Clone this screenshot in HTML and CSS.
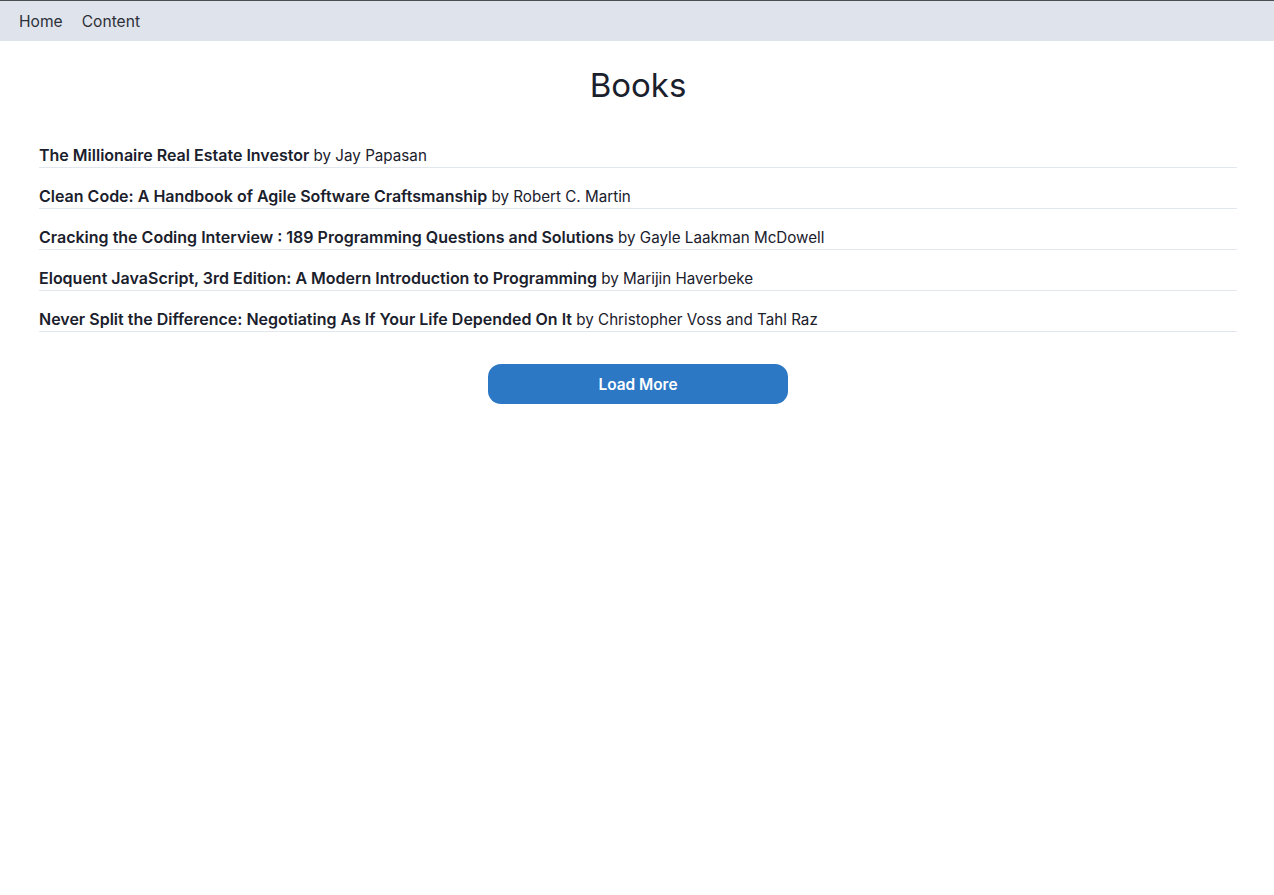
FILE: index.html
```html
<!DOCTYPE html>
<html lang="en">
<head>
<meta charset="utf-8">
<title>Books</title>
<link rel="stylesheet" href="styles.css">
</head>
<body>
<nav class="nav">
  <a class="nav-link" href="#">Home</a>
  <a class="nav-link" href="#">Content</a>
</nav>
<main class="main">
  <h1 class="title">Books</h1>
  <ul class="book-list">
    <li class="book"><strong class="book-title">The Millionaire Real Estate Investor</strong> by Jay Papasan</li>
    <li class="book"><strong class="book-title">Clean Code: A Handbook of Agile Software Craftsmanship</strong> by Robert C. Martin</li>
    <li class="book"><strong class="book-title">Cracking the Coding Interview : 189 Programming Questions and Solutions</strong> by Gayle Laakman McDowell</li>
    <li class="book"><strong class="book-title">Eloquent JavaScript, 3rd Edition: A Modern Introduction to Programming</strong> by Marijin Haverbeke</li>
    <li class="book"><strong class="book-title">Never Split the Difference: Negotiating As If Your Life Depended On It</strong> by Christopher Voss and Tahl Raz</li>
  </ul>
  <div class="actions">
    <button class="load-more" type="button">Load More</button>
  </div>
</main>
</body>
</html>
```

FILE: styles.css
```css
* { box-sizing: border-box; }
html, body {
  margin: 0;
  padding: 0;
  background: #ffffff;
}
body {
  font-family: Inter, "Noto Sans", sans-serif;
  color: #1a202c;
  font-size: 16px;
}
.nav {
  display: flex;
  align-items: center;
  gap: 19px;
  height: 41px;
  padding: 0 19px;
  background: #dfe4ec;
  border-top: 1px solid #4a4d52;
}
.nav-link {
  color: #2d3038;
  text-decoration: none;
  font-size: 15.6px;
}
.main {
  padding: 0 37px 0 39px;
}
.title {
  margin: 0;
  padding-top: 23px;
  text-align: center;
  font-size: 33px;
  font-weight: 400;
  line-height: 42px;
  color: #1a202c;
}
.book-list {
  list-style: none;
  margin: 34px 0 0;
  padding: 0;
}
.book {
  font-size: 15.2px;
  line-height: 20px;
  padding: 5px 0 1px;
  margin-top: 13px;
  border-bottom: 1px solid #e2e6ee;
}
.book:first-child { margin-top: 0; }
.book-title {
  font-weight: 600;
  font-size: 16px;
}
.actions {
  display: flex;
  justify-content: center;
  margin-top: 32px;
}
.load-more {
  width: 300px;
  height: 40px;
  border: none;
  border-radius: 13px;
  background: #2c78c5;
  color: #ffffff;
  font-family: Inter, "Noto Sans", sans-serif;
  font-size: 15.4px;
  font-weight: 600;
  cursor: pointer;
}
```
